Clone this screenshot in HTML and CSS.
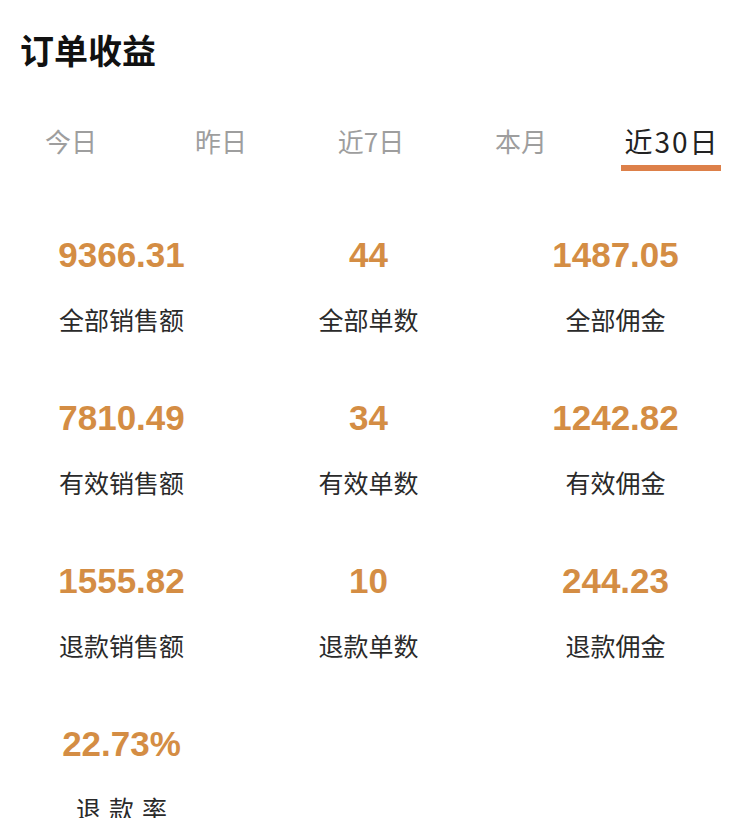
FILE: index.html
```html
<!DOCTYPE html>
<html lang="zh-CN">
<head>
<meta charset="utf-8">
<title>订单收益</title>
<link rel="stylesheet" href="styles.css">
</head>
<body>
<div class="page">
  <h1 class="title">订单收益</h1>
  <div class="tabs">
    <div class="tab"><span class="tab-label">今日</span></div>
    <div class="tab"><span class="tab-label">昨日</span></div>
    <div class="tab"><span class="tab-label">近7日</span></div>
    <div class="tab"><span class="tab-label">本月</span></div>
    <div class="tab active"><span class="tab-label">近30日</span></div>
  </div>
  <div class="grid">
    <div class="cell"><div class="num">9366.31</div><div class="label">全部销售额</div></div>
    <div class="cell"><div class="num">44</div><div class="label">全部单数</div></div>
    <div class="cell"><div class="num">1487.05</div><div class="label">全部佣金</div></div>
    <div class="cell"><div class="num">7810.49</div><div class="label">有效销售额</div></div>
    <div class="cell"><div class="num">34</div><div class="label">有效单数</div></div>
    <div class="cell"><div class="num">1242.82</div><div class="label">有效佣金</div></div>
    <div class="cell"><div class="num">1555.82</div><div class="label">退款销售额</div></div>
    <div class="cell"><div class="num">10</div><div class="label">退款单数</div></div>
    <div class="cell"><div class="num">244.23</div><div class="label">退款佣金</div></div>
    <div class="cell"><div class="num">22.73%</div><div class="label spaced">退款率</div></div>
  </div>
</div>
</body>
</html>
```

FILE: styles.css
```css
html, body {
  margin: 0;
  padding: 0;
  background: #ffffff;
}
body {
  font-family: "Noto Sans CJK SC", "Noto Sans", sans-serif;
  color: #222;
  overflow: hidden;
}
.page {
  width: 744px;
  height: 818px;
  overflow: hidden;
}
.title {
  margin: 33px 0 0 20px;
  font-size: 34px;
  line-height: 34px;
  font-weight: 700;
  color: #111;
}
.tabs {
  display: flex;
  margin: 54px 0 0 -4px;
}
.tab {
  width: 150px;
  flex: none;
  display: flex;
  flex-direction: column;
  align-items: center;
}
.tab-label {
  display: block;
  font-size: 26px;
  line-height: 40px;
  color: #9e9e9e;
  padding-bottom: 10px;
}
.tab.active .tab-label {
  font-size: 28px;
  letter-spacing: 2px;
  color: #222;
  padding: 0 1px 4px 3px;
  border-bottom: 6px solid #dd8049;
}
.grid {
  display: grid;
  grid-template-columns: repeat(3, 247px);
  row-gap: 64px;
  margin: 64px 0 0 -2px;
}
.cell {
  display: flex;
  flex-direction: column;
  align-items: center;
}
.num {
  font-family: "Liberation Sans", Arial, sans-serif;
  font-weight: 700;
  font-size: 35px;
  line-height: 40px;
  color: #d48d44;
}
.label {
  margin-top: 29px;
  font-size: 25px;
  line-height: 30px;
  color: #2a2a2a;
}
.label.spaced {
  letter-spacing: 8px;
  padding-left: 8px;
}
```
